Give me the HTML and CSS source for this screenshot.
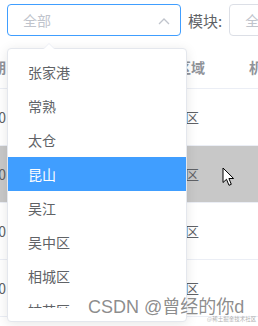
FILE: index.html
```html
<!DOCTYPE html>
<html lang="zh">
<head>
<meta charset="utf-8">
<link rel="stylesheet" href="styles.css">
</head>
<body>
<div class="page">
  <div class="toolbar">
    <div class="select is-focus">
      <span class="placeholder">全部</span>
      <svg class="arrow" width="12" height="8" viewBox="0 0 12 8"><path d="M1 7 L6 2 L11 7" fill="none" stroke="#c0c4cc" stroke-width="1.3"/></svg>
    </div>
    <label class="label">模块:</label>
    <div class="select second"><span class="placeholder">全部</span></div>
  </div>

  <div class="table">
    <div class="tr head">
      <div class="c1">日期</div><div class="c2">地区</div><div class="c3">区域</div><div class="c4">机构</div>
    </div>
    <div class="tr">
      <div class="c1">2020</div><div class="c2"></div><div class="c3 cell">区</div><div class="c4"></div>
    </div>
    <div class="tr hover">
      <div class="c1">2020</div><div class="c2"></div><div class="c3 cell">区</div><div class="c4"></div>
    </div>
    <div class="tr">
      <div class="c1">2020</div><div class="c2"></div><div class="c3 cell">区</div><div class="c4"></div>
    </div>
    <div class="tr">
      <div class="c1">2020</div><div class="c2"></div><div class="c3 cell">区</div><div class="c4"></div>
    </div>
  </div>

  <div class="dropdown">
    <div class="popper-arrow"></div>
    <ul class="list">
      <li>张家港</li>
      <li>常熟</li>
      <li>太仓</li>
      <li class="active">昆山</li>
      <li>吴江</li>
      <li>吴中区</li>
      <li>相城区</li>
      <li>姑苏区</li>
    </ul>
  </div>

  <svg class="cursor" width="14" height="20" viewBox="0 0 14 20"><path d="M1 1 L1 15.5 L4.5 12.3 L7 18.3 L9.3 17.3 L6.9 11.5 L11.6 11.5 Z" fill="#fff" stroke="#000" stroke-width="1" stroke-linejoin="round"/></svg>

  <div class="watermark">CSDN @曾经的你d</div>
  <div class="watermark-small">@稀土掘金技术社区</div>
</div>
</body>
</html>
```

FILE: styles.css
```css
* { box-sizing: border-box; }
html, body { margin: 0; padding: 0; background: #fff; }
body {
  font-family: "Noto Sans CJK SC", "Liberation Sans", sans-serif;
  font-size: 14px;
  color: #606266;
  width: 258px;
  height: 326px;
  overflow: hidden;
}
.page { position: relative; width: 258px; height: 326px; overflow: hidden; }

.toolbar {
  display: flex;
  align-items: center;
  padding: 4px 0 0 7px;
  height: 36px;
  gap: 7px;
}
.select {
  position: relative;
  flex: none;
  width: 174px;
  height: 32px;
  border: 1px solid #dcdfe6;
  border-radius: 4px;
  display: flex;
  align-items: center;
  padding-left: 15px;
}
.select.is-focus { border-color: #409eff; }
.select.second { width: 100px; }
.placeholder { color: #c0c4cc; font-size: 14px; line-height: 1; }
.arrow { position: absolute; left: 150px; top: 12px; }
.label { color: #606266; font-size: 15px; line-height: 1; white-space: nowrap; }

.table { margin-top: 9px; }
.tr {
  display: flex;
  height: 57px;
  border-bottom: 1px solid #ebeef5;
  align-items: center;
}
.tr.head { height: 44px; color: #909399; font-weight: bold; }
.tr.hover { background: #c8c8c8; }
.c1 { width: 7px; flex: none; display: flex; justify-content: flex-end; white-space: nowrap; padding-right: 1px; }
.head .c1 { padding-right: 1px; }
.c2 { width: 170px; flex: none; }
.c3 { width: 72px; flex: none; white-space: nowrap; }
.c3.cell { padding-left: 8px; }
.c4 { flex: 1; white-space: nowrap; }

.dropdown {
  position: absolute;
  left: 7px;
  top: 48px;
  width: 180px;
  height: 274px;
  background: #fff;
  border: 1px solid #e4e7ed;
  border-radius: 4px;
  box-shadow: 0 2px 12px 0 rgba(0, 0, 0, 0.1);
  padding: 6px 0 12px;
}
.popper-arrow {
  position: absolute;
  left: 35px;
  top: -6px;
  width: 0; height: 0;
  border-left: 6px solid transparent;
  border-right: 6px solid transparent;
  border-bottom: 6px solid #ebeef5;
}
.popper-arrow::after {
  content: "";
  position: absolute;
  left: -6px;
  top: 1px;
  border-left: 6px solid transparent;
  border-right: 6px solid transparent;
  border-bottom: 6px solid #fff;
}
.list {
  list-style: none;
  margin: 0;
  padding: 0;
  height: 253px;
  overflow: hidden;
}
.list li {
  height: 34px;
  line-height: 34px;
  padding-left: 20px;
  font-size: 14px;
  color: #606266;
  white-space: nowrap;
}
.list li.active { background: #409eff; color: #fff; }

.cursor { position: absolute; left: 222px; top: 167px; }

.watermark {
  position: absolute;
  left: 88px;
  top: 295px;
  font-family: "Liberation Sans", "Noto Sans CJK SC", sans-serif;
  font-size: 18px;
  line-height: 24px;
  color: rgba(120, 120, 120, 0.85);
  white-space: nowrap;
}
.watermark-small {
  position: absolute;
  left: 207px;
  top: 316px;
  font-size: 5.5px;
  line-height: 7px;
  color: #b0b0b0;
  white-space: nowrap;
}
```
